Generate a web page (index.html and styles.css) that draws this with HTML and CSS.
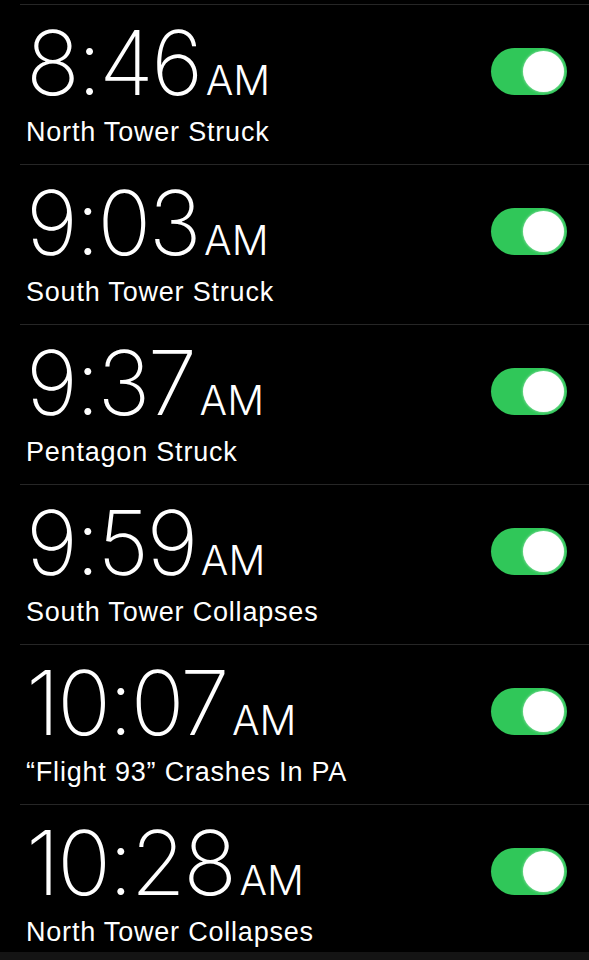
FILE: index.html
```html
<!DOCTYPE html>
<html lang="en">
<head>
<meta charset="utf-8">
<title>Alarms</title>
<link rel="stylesheet" href="styles.css">
</head>
<body>
<main class="alarms">
  <div class="alarm">
    <div class="info">
      <div class="time"><span class="digits">8:46</span><span class="ampm">AM</span></div>
      <div class="label">North Tower Struck</div>
    </div>
    <div class="toggle"><span class="knob"></span></div>
  </div>
  <div class="alarm">
    <div class="info">
      <div class="time"><span class="digits">9:03</span><span class="ampm">AM</span></div>
      <div class="label">South Tower Struck</div>
    </div>
    <div class="toggle"><span class="knob"></span></div>
  </div>
  <div class="alarm">
    <div class="info">
      <div class="time"><span class="digits">9:37</span><span class="ampm">AM</span></div>
      <div class="label">Pentagon Struck</div>
    </div>
    <div class="toggle"><span class="knob"></span></div>
  </div>
  <div class="alarm">
    <div class="info">
      <div class="time"><span class="digits">9:59</span><span class="ampm">AM</span></div>
      <div class="label">South Tower Collapses</div>
    </div>
    <div class="toggle"><span class="knob"></span></div>
  </div>
  <div class="alarm">
    <div class="info">
      <div class="time"><span class="digits">10:07</span><span class="ampm">AM</span></div>
      <div class="label">“Flight 93” Crashes In PA</div>
    </div>
    <div class="toggle"><span class="knob"></span></div>
  </div>
  <div class="alarm last">
    <div class="info">
      <div class="time"><span class="digits">10:28</span><span class="ampm">AM</span></div>
      <div class="label">North Tower Collapses</div>
    </div>
    <div class="toggle"><span class="knob"></span></div>
  </div>
</main>
<div class="bottom-bar"></div>
</body>
</html>
```
FILE: styles.css
```css
html, body {
  margin: 0;
  padding: 0;
  background: #000;
  height: 960px;
  overflow: hidden;
}
body {
  font-family: "Inter", "Liberation Sans", sans-serif;
  color: #fff;
}
.alarms {
  padding-top: 4px;
  margin-left: 20px;
}
.alarm {
  height: 159px;
  border-top: 1px solid #262626;
  display: flex;
  align-items: flex-start;
  justify-content: space-between;
  padding-left: 6px;
  padding-right: 22px;
  box-sizing: content-box;
}
.alarm.last {
  height: 147px;
}
.info {
  display: flex;
  flex-direction: column;
  padding-top: 13px;
}
.time {
  display: flex;
  align-items: baseline;
  line-height: 1;
}
.digits {
  font-size: 89px;
  font-weight: 200;
  letter-spacing: -2.5px;
}
.ampm {
  font-size: 41px;
  font-weight: 300;
  margin-left: 5px;
}
.label {
  font-family: "Liberation Sans", sans-serif;
  font-size: 27px;
  letter-spacing: 0.8px;
  margin-top: 10px;
}
.toggle {
  margin-top: 43px;
  width: 76px;
  height: 47px;
  border-radius: 24px;
  background: #30c759;
  display: flex;
  align-items: center;
  justify-content: flex-end;
  padding-right: 3px;
  box-sizing: border-box;
}
.knob {
  width: 41px;
  height: 41px;
  border-radius: 50%;
  background: #fff;
  box-shadow: 0 0 3px rgba(255, 255, 255, 0.6);
}
.bottom-bar {
  height: 8px;
  background: #141414;
}
```
